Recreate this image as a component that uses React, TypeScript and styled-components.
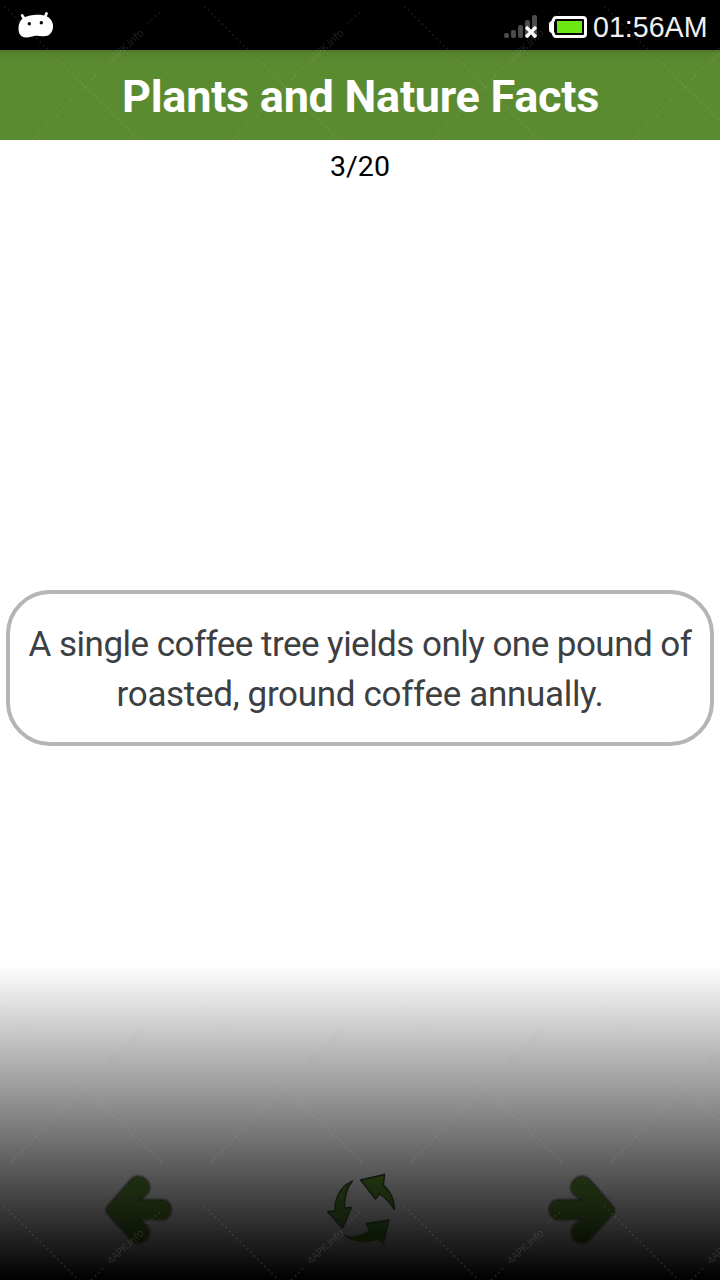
import React from "react";
import styled, { createGlobalStyle } from "styled-components";

const GlobalStyle = createGlobalStyle`
  * { box-sizing: border-box; }
  body { margin: 0; background: #fff; }
`;

const Screen = styled.div`
  position: relative;
  display: flex;
  flex-direction: column;
  width: 720px;
  height: 1280px;
  overflow: hidden;
  background: #fff;
  font-family: Roboto, "Liberation Sans", sans-serif;
`;

const StatusBar = styled.header`
  display: flex;
  align-items: center;
  justify-content: space-between;
  flex: none;
  height: 50px;
  padding: 0 12px 0 17px;
  background: #000;
`;

const StatusIcons = styled.div`
  display: flex;
  align-items: center;
  height: 50px;
`;

const Clock = styled.span`
  margin-left: 4px;
  padding-top: 4px;
  width: 115px;
  color: #f0f0f0;
  font: 28.6px/46px "Liberation Sans", sans-serif;
  white-space: nowrap;
`;

const TitleBar = styled.h1`
  display: flex;
  align-items: center;
  justify-content: center;
  flex: none;
  height: 90px;
  margin: 0;
  padding: 4px 0 0 1px;
  background: linear-gradient(#4c7627 0, #56832d 3px, #5a892f 12px, #5b8b30 24px);
  color: #fff;
  font-size: 45px;
  font-weight: 700;
  letter-spacing: -0.27px;
  line-height: 52px;
  white-space: nowrap;
`;

const Counter = styled.div`
  flex: none;
  height: 54px;
  color: #000;
  font-size: 28.5px;
  line-height: 54px;
  text-align: center;
`;

const FactArea = styled.main`
  display: flex;
  align-items: flex-end;
  flex: none;
  height: 552px;
  padding: 0 6px;
`;

const FactCard = styled.p`
  flex: 1;
  height: 156px;
  margin: 0;
  padding: 26px 0 0;
  border: 4px solid #b5b5b5;
  border-radius: 44px;
  background: #fff;
  color: #3c4043;
  font-size: 35px;
  line-height: 50px;
  text-align: center;
  white-space: nowrap;
`;

const FactLine = styled.span<{ $tracking: number }>`
  display: block;
  letter-spacing: ${(p) => p.$tracking}px;
`;

const Footer = styled.footer`
  display: flex;
  align-items: flex-end;
  justify-content: space-between;
  height: 315px;
  margin-top: auto;
  padding: 0 85px 20px 90px;
  background: linear-gradient(#fff, #000);
`;

const NavButton = styled.button`
  display: block;
  width: 100px;
  height: 100px;
  padding: 0;
  border: 0;
  background: none;
`;

const Watermark = styled.svg`
  position: absolute;
  inset: 0;
  pointer-events: none;
`;

const AndroidIcon = () => (
  <svg width="38" height="50" viewBox="17 0 38 50">
    <path d="M22.200 15.500l2.600 4M46.500 13.500l-1.800 4.500" stroke="#fff" strokeWidth="2.800" strokeLinecap="round" />
    <path
      d="M24 17.500C29 14.500 42 13.500 47 16.500C52 19 54.500 25 52.300 30.500C50.500 35.500 46.500 36.500 42 36.300C37 35.200 34.500 35.700 31 36.800C26 38.500 21 37.500 19.400 33.500C17.500 28 18.700 20.500 24 17.500Z"
      fill="#fff"
    />
    <circle cx="29.300" cy="23.700" r="1.700" fill="#000" />
    <circle cx="41.300" cy="22.700" r="1.700" fill="#000" />
  </svg>
);

const SignalIcon = () => (
  <svg width="36" height="50" viewBox="503 0 36 50">
    <g fill="#4b4b4b">
      <rect x="504" y="33" width="5" height="5" rx="2" />
      <rect x="511" y="30" width="5" height="8" rx="2" />
      <rect x="518" y="25" width="5" height="13" rx="2" />
      <rect x="525" y="20" width="5" height="18" rx="2" />
      <rect x="532" y="15" width="5" height="23" rx="2" />
    </g>
    <path d="M526 27l10 10M536 27l-10 10" stroke="#fff" strokeWidth="3.200" />
  </svg>
);

const BatteryIcon = () => (
  <svg width="50" height="50" viewBox="539 0 50 50">
    <path d="M549 24q0-3 4-3v12q-4 0-4-3z" fill="#fff" />
    <path
      d="M556 17.500H583q2.500 0 2.500 2.500V34q0 2.500-2.500 2.500H556q-2 0-2.500-2.500L552.500 32V22L553.500 20q.5-2.500 2.500-2.500Z"
      stroke="#fff"
      strokeWidth="3"
      fill="#000"
    />
    <rect x="557" y="21" width="25" height="12" fill="#6be712" />
  </svg>
);

const ArrowDrawing = ({ id, flipped = false }: { id: string; flipped?: boolean }) => (
  <svg width="100" height="100" viewBox="0 0 100 100">
    <defs>
      <linearGradient id={id} x1="0" y1="16" x2="0" y2="84" gradientUnits="userSpaceOnUse">
        <stop stopColor="#203012" />
        <stop offset=".5" stopColor="#17220c" />
        <stop offset="1" stopColor="#091004" />
      </linearGradient>
      <filter id={`${id}-soft`}>
        <feGaussianBlur stdDeviation=".8" />
      </filter>
    </defs>
    <g transform={flipped ? "translate(95.500 0) scale(-1 1)" : undefined}>
      {["edge", "face"].map((part) => (
        <path
          key={part}
          d="M18 47L42 19.500C50 12 64 23 57 33L48 40.500H72C83.500 41 83.500 58.500 72 59H48L57 67C64 77 50 88 42 80L18 53Q15.500 50 18 47Z"
          fill={part === "face" ? `url(#${id})` : "#0b1007"}
          stroke={part === "edge" ? "#0d120a" : "none"}
          strokeWidth="2"
          strokeLinejoin="round"
          filter={part === "edge" ? `url(#${id}-soft)` : undefined}
        />
      ))}
    </g>
  </svg>
);

const RefreshDrawing = () => (
  <svg width="100" height="100" viewBox="0 0 100 100">
    <defs>
      <linearGradient id="cycle" x1="0" y1="14" x2="0" y2="84" gradientUnits="userSpaceOnUse">
        <stop stopColor="#213312" />
        <stop offset=".5" stopColor="#17240c" />
        <stop offset="1" stopColor="#0a1304" />
      </linearGradient>
      <filter id="cycle-soft">
        <feGaussianBlur stdDeviation=".5" />
      </filter>
    </defs>
    <g
      transform="translate(-2.500 0)"
      fill="url(#cycle)"
      stroke="#10170d"
      strokeWidth="1.300"
      strokeLinejoin="round"
      filter="url(#cycle-soft)"
    >
      <path d="M42 21C31 25 24 37 24.500 51L17 51.500L32 68.500L41 47.500L34 48C34 38 36 28 42 21Z" />
      <path d="M50 20L74 14.500L73 25C80 31 84.500 41 84 50C80 43 75.500 38 69 34L65 39Z" />
      <path d="M34 75.500C42 78 50 76.500 59 71L56 63.500L78.500 60L73 84L67 79.500C57 83 43 82.500 34 75.500Z" />
    </g>
  </svg>
);

const WatermarkLayer = () => (
  <Watermark width="720" height="1280" aria-hidden="true">
    <defs>
      <pattern id="mark" width="200" height="200" patternUnits="userSpaceOnUse">
        <g stroke="#c0c0c0" strokeOpacity=".13" strokeWidth="1.600" strokeDasharray="2 3" fill="none">
          <path d="M4 6L162 163M160 12L148 23M103 68L10 163" />
        </g>
        <text
          x="125"
          y="46.500"
          transform="rotate(-43 125 46.500)"
          textAnchor="middle"
          dominantBaseline="central"
          fill="#999"
          fillOpacity=".2"
          fontFamily="Open Sans, sans-serif"
          fontSize="10.500"
          textLength="46"
        >
          4APK.info
        </text>
      </pattern>
    </defs>
    <rect width="720" height="140" fill="url(#mark)" />
    <rect y="1000" width="720" height="280" fill="url(#mark)" />
  </Watermark>
);

export default function App() {
  return (
    <>
      <GlobalStyle />
      <Screen>
        <StatusBar>
          <AndroidIcon />
          <StatusIcons>
            <SignalIcon />
            <BatteryIcon />
            <Clock>01:56AM</Clock>
          </StatusIcons>
        </StatusBar>
        <TitleBar>Plants and Nature Facts</TitleBar>
        <Counter>3/20</Counter>
        <FactArea>
          <FactCard>
            <FactLine $tracking={-0.53}>A single coffee tree yields only one pound of</FactLine>
            <FactLine $tracking={-0.32}>roasted, ground coffee annually.</FactLine>
          </FactCard>
        </FactArea>
        <Footer>
          <NavButton aria-label="Previous">
            <ArrowDrawing id="previous" />
          </NavButton>
          <NavButton aria-label="Shuffle">
            <RefreshDrawing />
          </NavButton>
          <NavButton aria-label="Next">
            <ArrowDrawing id="next" flipped />
          </NavButton>
        </Footer>
        <WatermarkLayer />
      </Screen>
    </>
  );
}
